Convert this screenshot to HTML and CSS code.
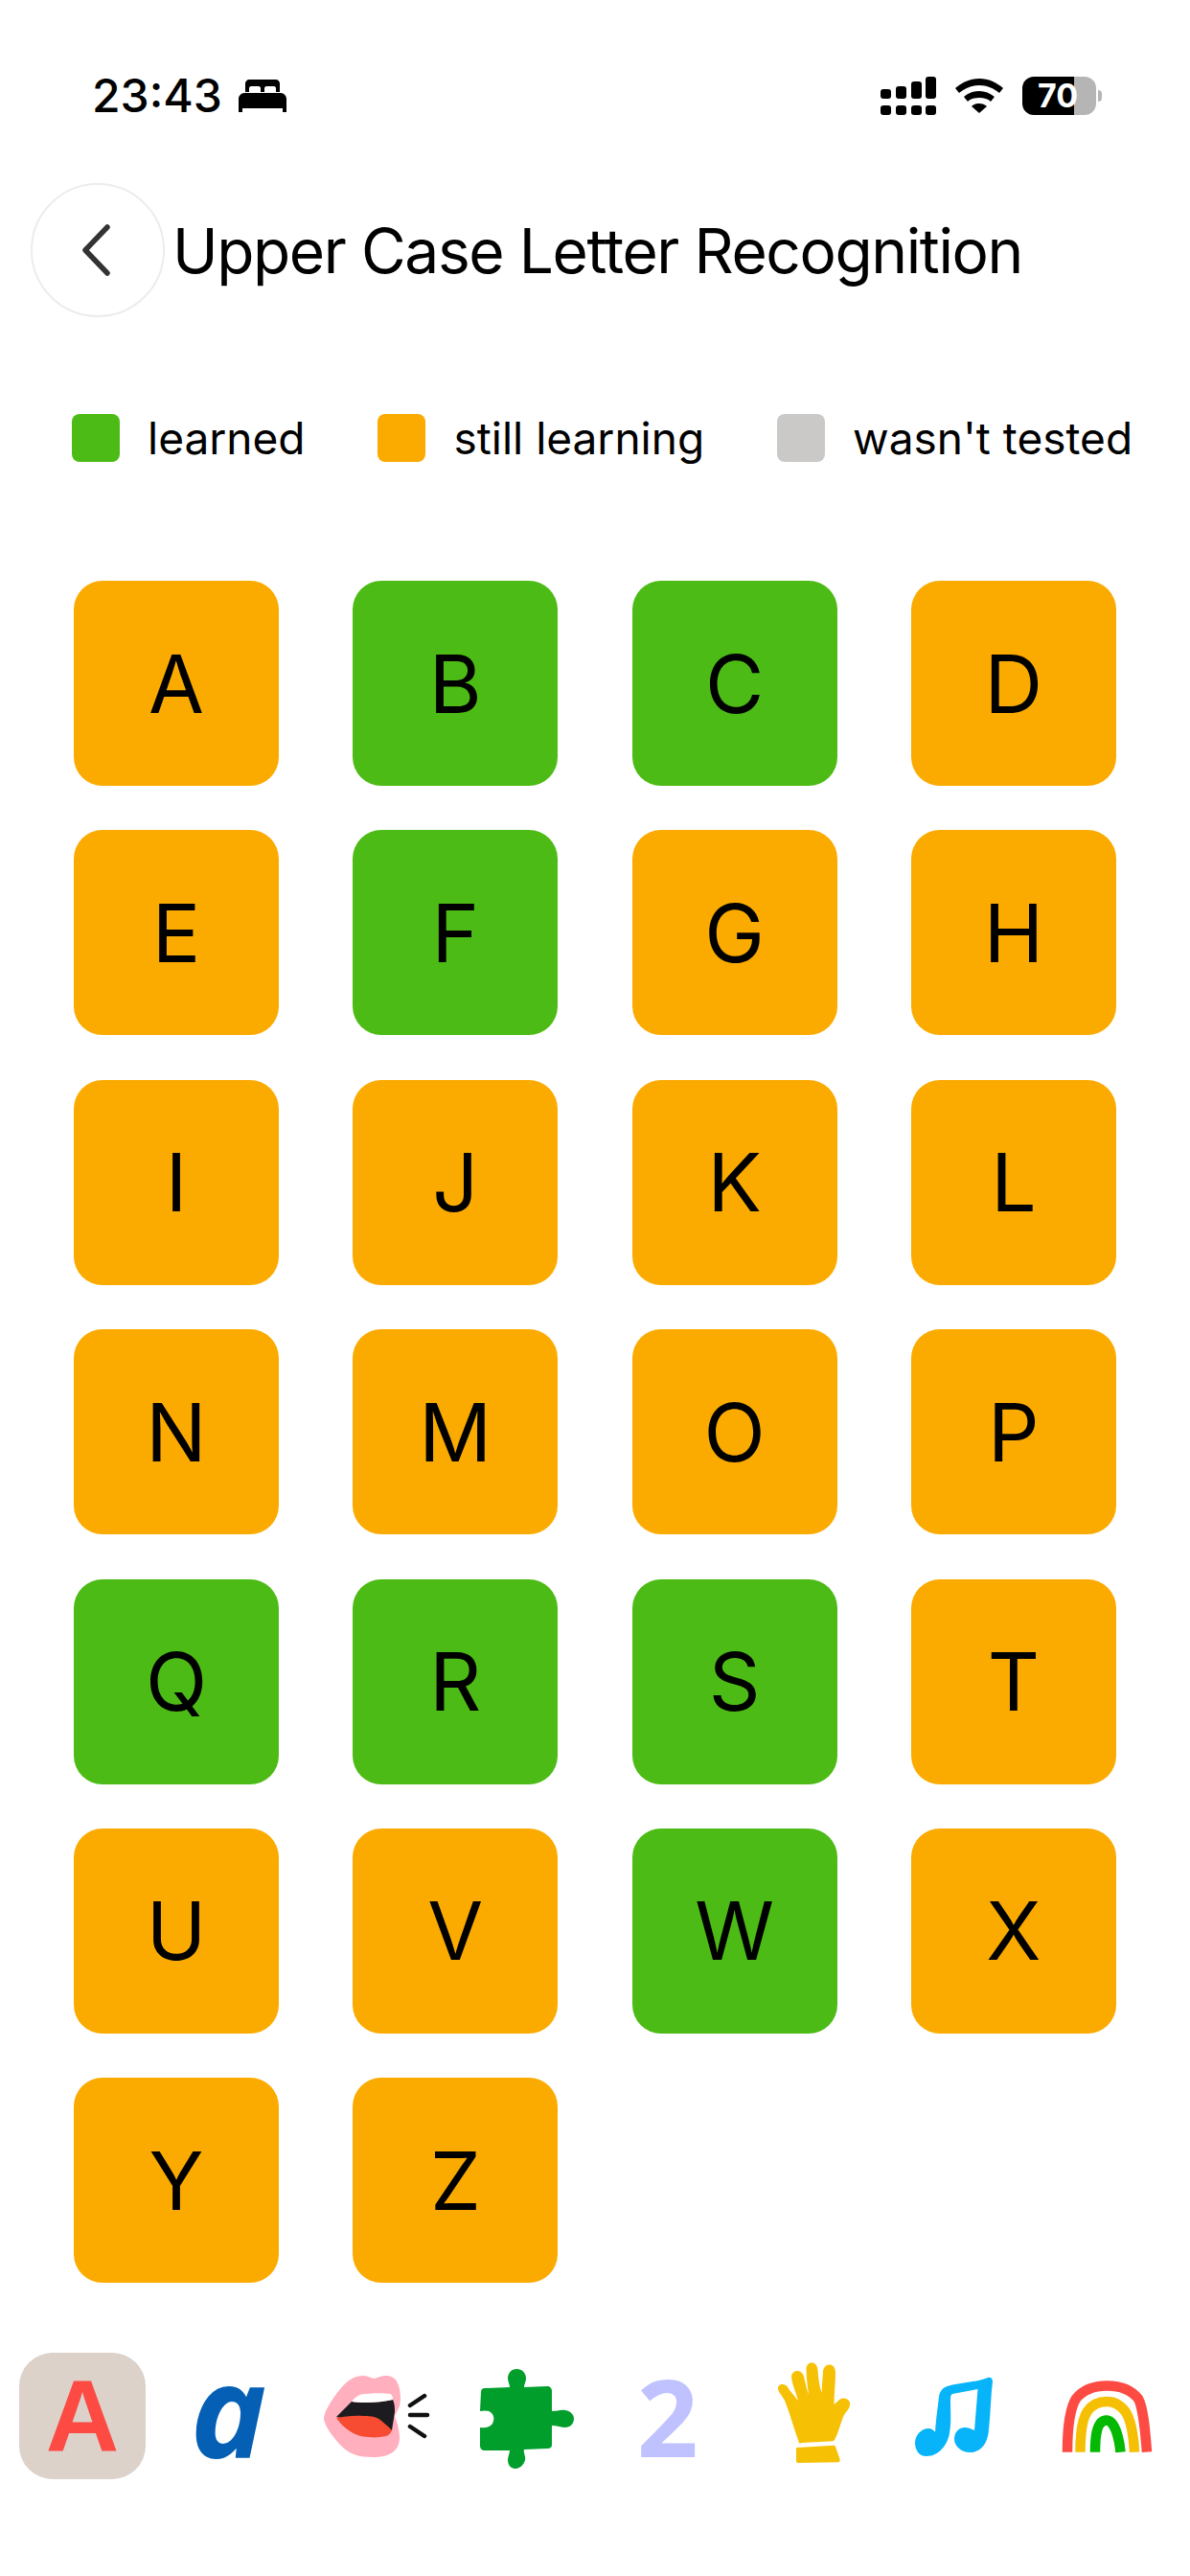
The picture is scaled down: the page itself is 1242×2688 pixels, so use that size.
FILE: index.html
```html
<!DOCTYPE html>
<html lang="en">
<head>
  <meta charset="utf-8"/>
  <title>Upper Case Letter Recognition</title>
  <meta name="viewport" content="width=device-width, initial-scale=1"/>
  <link rel="stylesheet" href="styles.css">
</head>
<body>
  <div class="status-bar">
    <div class="status-left">
      <span class="clock">23:43</span>
      <svg class="bed" viewBox="0 0 50 34" width="50" height="34">
        <path d="M7 13V4c0-2 2-4 4-4h28c2 0 4 2 4 4v9h-4V9c0-1-1-2-2-2h-8c-1 0-2 1-2 2v4h-4V9c0-1-1-2-2-2h-8c-1 0-2 1-2 2v4z"/>
        <path d="M6 14h38c3 0 6 3 6 6v14h-4v-4H4v4H0V20c0-3 3-6 6-6z"/>
      </svg>
    </div>
    <div class="status-right">
      <svg class="signal" viewBox="0 0 58 40" width="58" height="40">
        <rect x="0" y="13" width="11" height="10" rx="3"/>
        <rect x="16" y="10" width="11" height="13" rx="3"/>
        <rect x="32" y="5" width="11" height="18" rx="3"/>
        <rect x="47" y="0" width="11" height="23" rx="3"/>
        <rect x="0" y="30" width="11" height="10" rx="3"/>
        <rect x="16" y="30" width="11" height="10" rx="3"/>
        <rect x="32" y="30" width="11" height="10" rx="3"/>
        <rect x="47" y="30" width="11" height="10" rx="3"/>
      </svg>
      <svg class="wifi" viewBox="0 0 50 36" width="50" height="36">
        <path d="M25 0c10 0 18 4 25 10l-4 5C40 10 33 7 25 7S10 10 4 15L0 10C7 4 15 0 25 0z"/>
        <path d="M25 13c6 0 11 2 16 6l-4 5c-3-3-7-4-12-4s-9 1-12 4l-4-5c5-4 10-6 16-6z"/>
        <path d="M25 26c3 0 6 1 8 3l-8 7-8-7c2-2 5-3 8-3z"/>
      </svg>
      <div class="battery">
        <div class="battery-body">70</div>
        <div class="battery-nub"></div>
      </div>
    </div>
  </div>

  <div class="header">
    <button class="back-btn">
      <svg viewBox="0 0 32 54" width="32" height="54">
        <path d="M28 3L5 27l23 24" fill="none" stroke="#333" stroke-width="5.5" stroke-linecap="round" stroke-linejoin="round"/>
      </svg>
    </button>
    <h1>Upper Case Letter Recognition</h1>
  </div>

  <div class="legend">
    <div class="legend-item"><span class="swatch learned"></span>learned</div>
    <div class="legend-item"><span class="swatch learning"></span>still learning</div>
    <div class="legend-item"><span class="swatch untested"></span>wasn't tested</div>
  </div>

  <div class="letters">
    <div class="tile learning">A</div>
    <div class="tile learned">B</div>
    <div class="tile learned">C</div>
    <div class="tile learning">D</div>
    <div class="tile learning">E</div>
    <div class="tile learned">F</div>
    <div class="tile learning">G</div>
    <div class="tile learning">H</div>
    <div class="tile learning">I</div>
    <div class="tile learning">J</div>
    <div class="tile learning">K</div>
    <div class="tile learning">L</div>
    <div class="tile learning">N</div>
    <div class="tile learning">M</div>
    <div class="tile learning">O</div>
    <div class="tile learning">P</div>
    <div class="tile learned">Q</div>
    <div class="tile learned">R</div>
    <div class="tile learned">S</div>
    <div class="tile learning">T</div>
    <div class="tile learning">U</div>
    <div class="tile learning">V</div>
    <div class="tile learned">W</div>
    <div class="tile learning">X</div>
    <div class="tile learning">Y</div>
    <div class="tile learning">Z</div>
  </div>

  <div class="tabs">
    <div class="tab active"><span class="tab-upper">A</span></div>
    <div class="tab"><span class="tab-lower">a</span></div>
    <div class="tab">
      <svg viewBox="0 0 132 132" width="132" height="132">
        <path fill="#ffafbd" d="M54 24C60 24 62 27 66 27C70 26 72 24 79 24C90 25 93 36 93 48C93 56 90 60 87 66C90 74 92 82 92 90C91 104 80 109 64 109C50 109 40 106 32 98C24 90 13 76 13 68C14 60 22 48 30 38C38 28 46 24 54 24Z"/>
        <path fill="#1c1b1f" d="M42 51C55 53 72 52 85 49C87 53 87 58 87 62L84 81L26 67Z"/>
        <path fill="#fff" d="M42 51C46 46 50 43 56 43C66 42 76 42 82 43C85 44 85 47 85 49C72 52 55 53 42 51Z"/>
        <path fill="#f74c32" d="M26 68C34 67 44 65 54 66C63 66 69 67 73 71C77 74 81 78 84 81C83 84 81 86 78 87C72 88 66 89 60 88C53 88 47 86 42 83C35 79 30 74 26 68Z"/>
        <path fill="none" stroke="#111" stroke-width="4.5" stroke-linecap="round" d="M103 55L118 45M103 65H121M103 77L118 87"/>
      </svg>
    </div>
    <div class="tab">
      <svg viewBox="0 0 132 132" width="132" height="132">
        <path fill="#029e2c" d="M28 37L54 36C54 33 52 30 52 27C52 21 56 17 61 17C67 17 71 21 71 27C71 30 69 33 69 36L93 35C96 35 98 37 98 40L98 61C103 61 108 59 112 60C118 61 121 65 121 69C121 74 117 78 112 78C108 78 103 76 98 76L98 96C98 99 96 100 93 100L69 101C68 105 71 108 70 112C69 117 64 121 60 121C55 121 52 117 52 112C52 108 54 105 54 102L28 102C25 102 23 100 23 97L23 78C28 79 33 78 36 74C38 70 38 66 35 63C32 60 28 60 23 61L24 41C24 39 25 37 28 37Z"/>
      </svg>
    </div>
    <div class="tab"><span class="tab-two">2</span></div>
    <div class="tab">
      <svg viewBox="0 0 132 132" width="132" height="132">
        <path fill="#f6c104" d="M51 94C46 80 41 62 36 50C33 44 30 42 29 38C29 34 31 33 34 33C37 33 39 35 41 39L50 50C48 42 44 34 43 26C43 21 46 19 49 19C53 19 56 22 56.5 27C58 33 59 38 61 44C60 36 58.5 26 58.5 17C58.5 13 61 10.5 64 10.5C68 10.5 70 13 70.5 18C71 26 72 34 74.5 42C75 34 75.5 26 76 19C77 15 79 12.5 82.5 12.5C86 12.5 89 15 89 21C89 32 87.5 43 87.5 54C90 52 94 47 98 47.5C102 48 105 51 104 55C103 60 99 62 97 67C94 75 91 86 88 91C87 92.5 85 92.5 83 92.5L54 94C52 95 51.5 95 51 94Z"/>
        <path fill="#f6c104" d="M49 99L87 96.7C88 96.7 88.5 97 89 98L93.5 111C94 113 93 114.3 92 114.3L50 115C48.5 115 48 114 48 113L48 100C48 99.5 48.5 99 49 99Z"/>
      </svg>
    </div>
    <div class="tab">
      <svg viewBox="0 0 132 132" width="132" height="132">
        <path fill="#07b4f9" d="M40 83C41 68 43 55 44 46C45 38 50 35 58 33.5C70 31 86 30 95 26C98 25 100 27 100 30C98 45 98 62 96 80C95 95 88 104 76 104C68 104 60 98 60 90C60 84 64 78 71 78C74 78 77 79 81 81L84.5 38L58 43C56 44 56 46 56 50C56 62 57 72 55 84C53 96 44 108 31 108C22 108 19 100 19 94C19 86 26 79 33 79C36 79 39 81 40 83Z"/>
      </svg>
    </div>
    <div class="tab">
      <svg viewBox="0 0 132 132" width="132" height="132" fill="none" stroke-width="10.5">
        <path stroke="#fd4a43" d="M25 103.7C25 75 28 58 34 48C42 38 55 34.5 66.5 34.5C78 34.5 91 38 99 48C104 57 106 78 108 103.7"/>
        <path stroke="#f5c004" d="M38.5 103.7C38.5 80 41 68 46 61C51 54 59 51 66 51C74 51 81 55 86 62C91 70 94 85 95 103.7"/>
        <path stroke="#03b903" d="M54 103.7C54 90 55 70.5 66 70.5C74 70.5 79 88 80.5 103.7"/>
      </svg>
    </div>
  </div>
</body>
</html>
```

FILE: styles.css
```css
* {
  box-sizing: border-box;
}
body {
  font-family: Inter, 'Noto Sans', sans-serif;
  width: 1242px;
  height: 2688px;
  margin: 0;
  background: #fff;
  color: #000;
  display: flex;
  flex-direction: column;
}
.status-bar {
  display: flex;
  justify-content: space-between;
  align-items: center;
  height: 40px;
  margin-top: 80px;
  padding: 0 92px 0 96px;
}
.status-left {
  display: flex;
  align-items: center;
  gap: 17px;
}
.clock {
  font-size: 48px;
  font-weight: 500;
  line-height: 40px;
}
.status-right {
  display: flex;
  align-items: center;
  gap: 20px;
}
.battery {
  display: flex;
  align-items: center;
  gap: 2px;
}
.battery-body {
  width: 77px;
  height: 40px;
  padding-left: 16px;
  border-radius: 12px;
  background: linear-gradient(to right, #000 54px, #b5b5b5 54px);
  color: #fff;
  font-size: 34px;
  font-weight: 700;
  line-height: 40px;
}
.battery-nub {
  width: 4px;
  height: 12px;
  background: #b5b5b5;
  border-radius: 0 6px 6px 0;
}
.header {
  display: flex;
  align-items: center;
  gap: 8px;
  margin-top: 71px;
  padding-left: 32px;
}
.back-btn {
  display: flex;
  align-items: center;
  justify-content: center;
  width: 140px;
  height: 140px;
  padding: 0 4px 0 0;
  background: #fff;
  border: 2px solid #eeeceb;
  border-radius: 50%;
}
h1 {
  margin: 0;
  font-size: 64px;
  font-weight: 400;
  letter-spacing: -1.4px;
}
.legend {
  display: flex;
  gap: 76px;
  margin-top: 101px;
  padding-left: 75px;
}
.legend-item {
  display: flex;
  align-items: center;
  gap: 29px;
  height: 50px;
  font-size: 46px;
}
.swatch {
  width: 50px;
  height: 50px;
  border-radius: 8px;
}
.learned {
  background: #4dbb15;
}
.learning {
  background: #fbab00;
}
.untested {
  background: #cbc9c7;
}
.letters {
  display: grid;
  grid-template-columns: repeat(4, 214px);
  grid-auto-rows: 214px;
  column-gap: 77.3px;
  row-gap: 46.4px;
  margin-top: 124px;
  padding-left: 77px;
}
.tile {
  display: flex;
  align-items: center;
  justify-content: center;
  border-radius: 30px;
  font-size: 84px;
}
.tabs {
  display: flex;
  gap: 20.7px;
  margin-top: auto;
  margin-bottom: 101px;
  padding-left: 20px;
}
.tab {
  display: flex;
  align-items: center;
  justify-content: center;
  width: 132px;
  height: 132px;
  flex-shrink: 0;
  border-radius: 35px;
}
.active {
  background: #dcd2ca;
}
.tab-upper {
  color: #fd4a43;
  font-family: 'Liberation Sans', sans-serif;
  font-size: 106px;
  font-weight: 700;
  line-height: 132px;
}
.tab-lower {
  color: #0560b5;
  font-family: 'Open Sans', sans-serif;
  font-size: 134px;
  font-style: italic;
  font-weight: 700;
  line-height: 120px;
  padding-bottom: 16px;
}
.tab-two {
  color: #c0c2ff;
  font-family: 'Open Sans', sans-serif;
  font-size: 112px;
  font-weight: 700;
  line-height: 132px;
}
```
